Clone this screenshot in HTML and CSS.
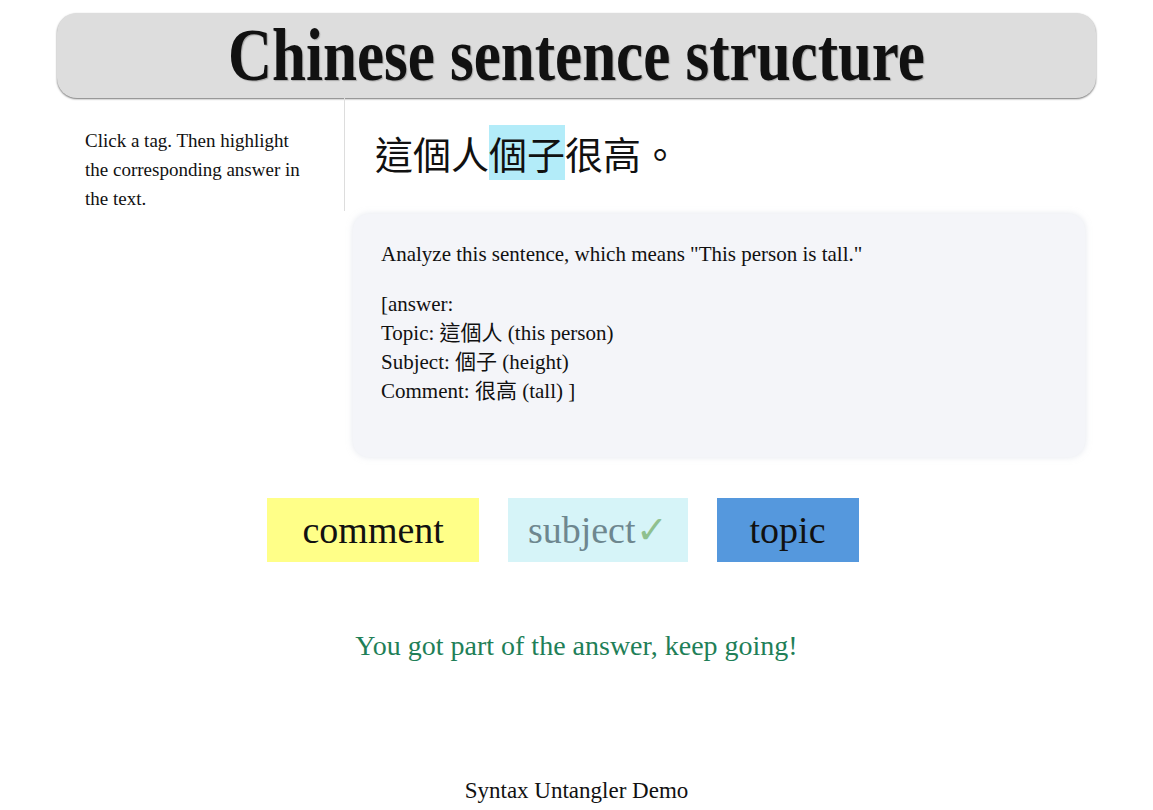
FILE: index.html
```html
<!DOCTYPE html>
<html lang="en">
<head>
    <meta charset="UTF-8">
    <meta name="viewport" content="width=device-width, initial-scale=1.0">
    <title>Syntax Untangler Demo</title>
    <link rel="stylesheet" href="styles.css">
</head>
<body>
    <div class="page">
        <div class="header">
            <h1>Chinese sentence structure</h1>
        </div>

        <div class="main">
            <div class="instructions">
                Click a tag. Then highlight the corresponding answer in the text.
            </div>
            <div class="exercise">
                <div class="sentence">這個人<span class="hl-subject">個子</span>很高。</div>
                <div class="question">
                    <p>Analyze this sentence, which means "This person is tall."</p>
                    <p>[answer:<br>
                    Topic: 這個人 (this person)<br>
                    Subject: 個子 (height)<br>
                    Comment: 很高 (tall) ]</p>
                </div>
            </div>
        </div>

        <div class="tags">
            <button class="tag tag-comment">comment</button>
            <button class="tag tag-subject done">subject<span class="check">✓</span></button>
            <button class="tag tag-topic">topic</button>
        </div>

        <div class="feedback">You got part of the answer, keep going!</div>

        <div class="footer">Syntax Untangler Demo</div>
    </div>
</body>
</html>
```

FILE: styles.css
```css
body {
    font-family: "Liberation Serif", "Noto Sans CJK TC", serif;
    margin: 0;
    background: white;
    color: #111;
}

.page {
    width: 1039px;
    margin: 0 auto;
    padding-top: 13px;
}

.header {
    background: #dddddd;
    border-radius: 20px;
    height: 85px;
    box-shadow: 0 1px 2px rgba(0,0,0,0.55);
    display: flex;
    align-items: center;
    justify-content: center;
}

.header h1 {
    margin: 0;
    font-size: 61px;
    font-weight: bold;
    line-height: 1;
    transform: scaleY(1.2);
    text-shadow: 1px 1px 1px rgba(0,0,0,0.25);
}

.main {
    display: flex;
}

.instructions {
    width: 288px;
    flex-shrink: 0;
    box-sizing: border-box;
    padding: 28px 35px 0 28px;
    font-size: 19px;
    line-height: 29px;
    border-right: 1px solid #ddd;
    height: 113px;
}

.exercise {
    flex: 1;
    padding-left: 8px;
    padding-right: 11px;
}

.sentence {
    font-family: "Noto Sans CJK TC", serif;
    font-size: 38px;
    line-height: 44px;
    margin: 33px 0 0 22px;
    height: 83px;
}

.hl-subject {
    background: #b3ecf9;
}

.question {
    background: #f4f5f9;
    border-radius: 16px;
    box-shadow: 0 0 6px rgba(200,205,220,0.5);
    padding: 26px 28px 40px;
    font-size: 21px;
    line-height: 29px;
    height: 243px;
    box-sizing: border-box;
}

.question p {
    margin: 0 0 21px;
}

.tags {
    display: flex;
    justify-content: center;
    gap: 29px;
    margin-top: 41px;
    padding-right: 27px;
}

.tag {
    font-family: "Liberation Serif", serif;
    font-size: 38px;
    border: none;
    height: 64px;
    padding: 0 35px;
    color: #111;
    cursor: pointer;
}

.tag-comment {
    background: #ffff88;
}

.tag-subject {
    background: #d6f4f8;
    padding: 0 20px;
}

.tag-subject.done {
    color: #6e878f;
}

.check {
    color: #8fc08f;
}

.tag-topic {
    background: #5598dd;
    padding: 0 33px;
}

.feedback {
    text-align: center;
    color: #1f7f58;
    font-size: 28px;
    margin-top: 68px;
}

.footer {
    text-align: center;
    font-size: 23px;
    margin-top: 116px;
}
```
